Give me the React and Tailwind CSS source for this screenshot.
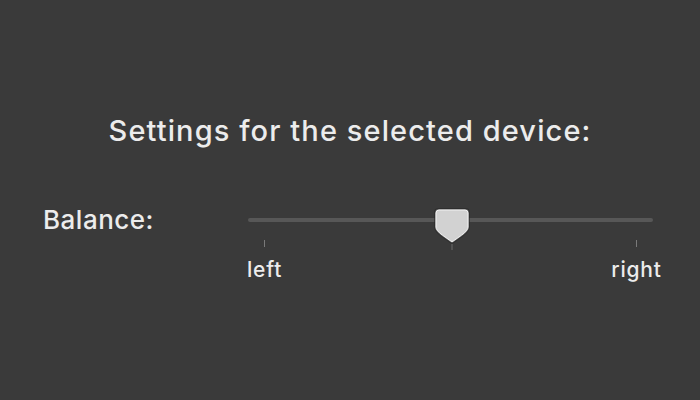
export default function App() {
  const font = { fontFamily: 'Inter, "Liberation Sans", Arial, sans-serif' };
  return (
    <div className="w-[700px] h-[400px] bg-[#3a3a3a] text-[#ececec] overflow-hidden" style={font}>
      <div className="pt-[113px] text-center text-[29px] leading-[36px] font-medium tracking-[1.1px]">
        Settings for the selected device:
      </div>
      <div className="mt-[55px] flex">
        <div className="pl-[43px] w-[248px] text-[26px] leading-[32px] font-medium tracking-[0.5px]">Balance:</div>
        <div className="relative w-[405px] flex flex-col">
          <div className="mt-[14px] h-[4px] rounded-full bg-[#575757]" />
          <div className="flex justify-between px-[16px]">
            {["left", "right"].map((l) => (
              <div key={l} className="w-[1px] flex flex-col items-center">
                <div className="mt-[18px] w-[1px] h-[7px] bg-[#7a7a7a]" />
                <div className="mt-[11px] whitespace-nowrap text-[21px] leading-[24px] font-medium tracking-[0.8px]">{l}</div>
              </div>
            ))}
          </div>
          <svg className="absolute left-[185px] top-[3px]" width="38" height="46" viewBox="-1 -1 38 46">
            <path
              d="M5 1 H31 Q35 1 35 5 V19 Q35 23 28 28 L19.5 34 Q18 35.5 16.5 34 L8 28 Q1 23 1 19 V5 Q1 1 5 1Z"
              fill="#d2d2d2"
              stroke="#262626"
              strokeWidth="2"
              strokeOpacity="0.6"
            />
            <path
              d="M5 2 H31 Q34 2 34 5 V19 Q34 22.5 27.5 27.2 L19 33.2 Q18 34 17 33.2 L8.5 27.2 Q2 22.5 2 19 V5 Q2 2 5 2Z"
              fill="none"
              stroke="#f2f2f2"
              strokeWidth="1"
            />
            <rect x="17.5" y="36" width="1" height="6" fill="#6a6a6a" />
          </svg>
        </div>
      </div>
    </div>
  );
}
